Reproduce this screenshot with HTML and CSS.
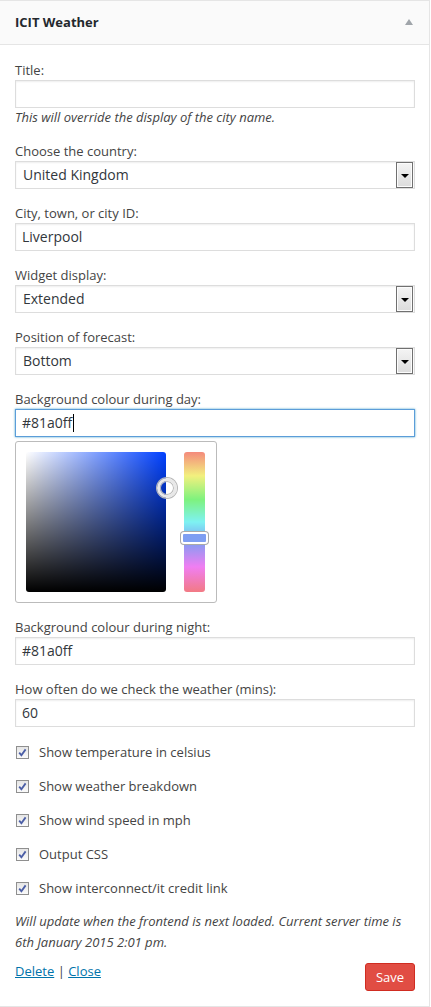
FILE: index.html
```html
<!DOCTYPE html>
<html lang="en">
<head>
<meta charset="utf-8">
<title>ICIT Weather</title>
<link rel="stylesheet" href="styles.css">
</head>
<body>
<div class="widget">
  <div class="widget-top">
    <h4 class="widget-title">ICIT Weather</h4>
    <span class="toggle"></span>
  </div>
  <div class="widget-inside">
    <div class="field">
      <div class="label">Title:</div>
      <div class="input"></div>
      <div class="desc">This will override the display of the city name.</div>
    </div>
    <div class="field">
      <div class="label">Choose the country:</div>
      <div class="select"><span class="val">United Kingdom</span><span class="arrow"></span></div>
    </div>
    <div class="field">
      <div class="label">City, town, or city ID:</div>
      <div class="input">Liverpool</div>
    </div>
    <div class="field">
      <div class="label">Widget display:</div>
      <div class="select"><span class="val">Extended</span><span class="arrow"></span></div>
    </div>
    <div class="field">
      <div class="label">Position of forecast:</div>
      <div class="select"><span class="val">Bottom</span><span class="arrow"></span></div>
    </div>
    <div class="field field-picker">
      <div class="label">Background colour during day:</div>
      <div class="input focus">#81a0ff<span class="caret"></span></div>
      <div class="picker">
        <div class="square">
          <span class="circle"></span>
        </div>
        <div class="strip">
          <span class="handle"></span>
        </div>
      </div>
    </div>
    <div class="field">
      <div class="label">Background colour during night:</div>
      <div class="input">#81a0ff</div>
    </div>
    <div class="field">
      <div class="label">How often do we check the weather (mins):</div>
      <div class="input">60</div>
    </div>
    <div class="checks">
      <div class="check"><span class="box"><svg viewBox="0 0 13 13" width="13" height="13"><path d="M3.2 6.6 L5.4 9.2 L9.6 3.4" fill="none" stroke="#4b5ea6" stroke-width="1.8"/></svg></span>Show temperature in celsius</div>
      <div class="check"><span class="box"><svg viewBox="0 0 13 13" width="13" height="13"><path d="M3.2 6.6 L5.4 9.2 L9.6 3.4" fill="none" stroke="#4b5ea6" stroke-width="1.8"/></svg></span>Show weather breakdown</div>
      <div class="check"><span class="box"><svg viewBox="0 0 13 13" width="13" height="13"><path d="M3.2 6.6 L5.4 9.2 L9.6 3.4" fill="none" stroke="#4b5ea6" stroke-width="1.8"/></svg></span>Show wind speed in mph</div>
      <div class="check"><span class="box"><svg viewBox="0 0 13 13" width="13" height="13"><path d="M3.2 6.6 L5.4 9.2 L9.6 3.4" fill="none" stroke="#4b5ea6" stroke-width="1.8"/></svg></span>Output CSS</div>
      <div class="check"><span class="box"><svg viewBox="0 0 13 13" width="13" height="13"><path d="M3.2 6.6 L5.4 9.2 L9.6 3.4" fill="none" stroke="#4b5ea6" stroke-width="1.8"/></svg></span>Show interconnect/it credit link</div>
    </div>
    <p class="note">Will update when the frontend is next loaded. Current server time is<br>6th January 2015 2:01 pm.</p>
    <div class="footer">
      <div class="links"><a href="#">Delete</a> | <a href="#">Close</a></div>
      <button class="save" type="button">Save</button>
    </div>
  </div>
</div>
</body>
</html>
```

FILE: styles.css
```css
* { box-sizing: border-box; }
html, body { margin: 0; padding: 0; background: #fff; }
body {
  font-family: "Open Sans", "Liberation Sans", sans-serif;
  font-size: 13px;
  color: #444;
}
.widget {
  width: 430px;
  border: 1px solid #e5e5e5;
  border-left: 0;
  background: #fff;
}
.widget-top {
  height: 44px;
  background: #fafafa;
  border-bottom: 1px solid #e5e5e5;
  display: flex;
  align-items: center;
  justify-content: space-between;
  padding: 0 16px 0 15px;
}
.widget-title {
  margin: 0;
  font-size: 13px;
  font-weight: 700;
  color: #23282d;
  line-height: 18px;
  padding-bottom: 1px;
}
.toggle {
  width: 0;
  height: 0;
  border-left: 4px solid transparent;
  border-right: 4px solid transparent;
  border-bottom: 6px solid #a0a5aa;
  margin-bottom: 1px;
}
.widget-inside {
  padding: 16px 14px 15px 15px;
}
.field { margin-bottom: 15px; }
.label {
  height: 19px;
  line-height: 19px;
}
.input, .select {
  height: 28px;
  border: 1px solid #ddd;
  box-shadow: inset 0 1px 2px rgba(0,0,0,.07);
  background: #fff;
  font-size: 14px;
  color: #32373c;
  line-height: 26px;
  padding: 0 6px;
  width: 400px;
}
.input.focus {
  border-color: #5b9dd9;
  box-shadow: 0 0 2px rgba(30,140,190,.8);
  display: flex;
  align-items: center;
}
.caret {
  display: inline-block;
  width: 1px;
  height: 18px;
  background: #000;
  margin-left: 1px;
}
.desc {
  font-style: italic;
  line-height: 19px;
  margin-bottom: 3px;
}
.select {
  display: flex;
  align-items: stretch;
  justify-content: space-between;
  padding: 0 1px 0 7px;
}
.select .val { line-height: 26px; }
.arrow {
  width: 17px;
  border: 1px solid #707070;
  box-shadow: inset 0 0 0 1px #fcfcfc;
  background: linear-gradient(#f4f4f4, #dcdcdc);
  display: flex;
  align-items: center;
  justify-content: center;
}
.arrow::after {
  content: "";
  width: 0;
  height: 0;
  border-left: 4px solid transparent;
  border-right: 4px solid transparent;
  border-top: 4px solid #000;
  margin-top: 1px;
}
.field-picker .input { margin-bottom: 4px; }
.field-picker { margin-bottom: 15px; }
.picker {
  width: 202px;
  height: 162px;
  border: 1px solid #bbb;
  border-radius: 3px;
  padding: 10px 10px 10px 10px;
  display: flex;
  gap: 18px;
}
.square {
  position: relative;
  width: 140px;
  height: 140px;
  border-radius: 3px;
  background:
    linear-gradient(to bottom, rgba(0,0,0,0), #000),
    linear-gradient(to right, #fff, rgba(255,255,255,0)),
    #0040ff;
}
.circle {
  position: absolute;
  left: 131px;
  top: 26px;
  width: 20px;
  height: 20px;
  border-radius: 50%;
  border: 3px solid #e8e8e8;
  box-shadow: 0 0 0 1px #b8b8b8, inset 0 0 0 1px #b8b8b8;
}
.strip {
  position: relative;
  width: 21px;
  height: 140px;
  border-radius: 3px;
  background: linear-gradient(to bottom,
    #f48a7c 0%, #f2f07e 17%, #7ef27e 34%, #7ef2f2 50%, #7e9ef2 64%, #f07ef2 82%, #f27a84 100%);
}
.handle {
  position: absolute;
  left: -3px;
  top: 80px;
  width: 27px;
  height: 12px;
  border-radius: 3px;
  border: 2px solid #fff;
  background: #7e9ef2;
  box-shadow: 0 0 0 1px #aaa;
}
.checks {
  padding-top: 1px;
  display: flex;
  flex-direction: column;
  gap: 15px;
  margin-bottom: 13px;
}
.check {
  display: flex;
  align-items: center;
  height: 19px;
  line-height: 19px;
}
.box {
  width: 13px;
  height: 13px;
  margin: 0 10px 0 1px;
  border: 1px solid #8f8f8f;
  background: linear-gradient(#e6e6e6, #fafafa);
  display: flex;
  align-items: center;
  justify-content: center;
}
.box svg { margin: -1px; display: block; }
.note {
  margin: 0 0 9px;
  font-style: italic;
  line-height: 21px;
}
.footer {
  display: flex;
  justify-content: space-between;
  align-items: flex-start;
}
.links { line-height: 19px; color: #444; }
.links a { color: #0073aa; text-decoration: underline; }
.save {
  height: 28px;
  width: 50px;
  padding: 0;
  margin-top: 1px;
  background: #e14d43;
  border: 1px solid #d02c21;
  border-radius: 3px;
  color: #fff;
  font-family: "Open Sans", "Liberation Sans", sans-serif;
  font-size: 13px;
  line-height: 26px;
}
```
